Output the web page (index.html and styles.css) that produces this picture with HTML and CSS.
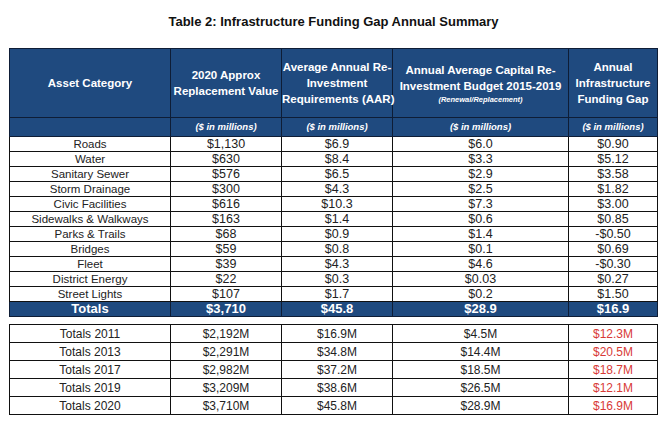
FILE: index.html
```html
<!DOCTYPE html>
<html>
<head>
<meta charset="utf-8">
<link rel="stylesheet" href="styles.css">
</head>
<body>
<div class="page">
  <h1 class="title">Table 2: Infrastructure Funding Gap Annual Summary</h1>
  <table class="summary">
    <colgroup>
      <col class="c1"><col class="c2"><col class="c3"><col class="c4"><col class="c5">
    </colgroup>
    <thead>
      <tr class="head">
        <th>Asset Category</th>
        <th>2020 Approx<br>Replacement Value</th>
        <th>Average Annual Re-<br>Investment<br>Requirements (AAR)</th>
        <th>Annual Average Capital Re-<br>Investment Budget 2015-2019<br><span class="note">(Renewal/Replacement)</span></th>
        <th>Annual<br>Infrastructure<br>Funding Gap</th>
      </tr>
      <tr class="units">
        <th></th>
        <th>($ in millions)</th>
        <th>($ in millions)</th>
        <th>($ in millions)</th>
        <th>($ in millions)</th>
      </tr>
    </thead>
    <tbody>
      <tr><td>Roads</td><td class="n">$1,130</td><td class="n">$6.9</td><td class="n">$6.0</td><td class="n">$0.90</td></tr>
      <tr><td>Water</td><td class="n">$630</td><td class="n">$8.4</td><td class="n">$3.3</td><td class="n">$5.12</td></tr>
      <tr><td>Sanitary Sewer</td><td class="n">$576</td><td class="n">$6.5</td><td class="n">$2.9</td><td class="n">$3.58</td></tr>
      <tr><td>Storm Drainage</td><td class="n">$300</td><td class="n">$4.3</td><td class="n">$2.5</td><td class="n">$1.82</td></tr>
      <tr><td>Civic Facilities</td><td class="n">$616</td><td class="n">$10.3</td><td class="n">$7.3</td><td class="n">$3.00</td></tr>
      <tr><td>Sidewalks &amp; Walkways</td><td class="n">$163</td><td class="n">$1.4</td><td class="n">$0.6</td><td class="n">$0.85</td></tr>
      <tr><td>Parks &amp; Trails</td><td class="n">$68</td><td class="n">$0.9</td><td class="n">$1.4</td><td class="n">-$0.50</td></tr>
      <tr><td>Bridges</td><td class="n">$59</td><td class="n">$0.8</td><td class="n">$0.1</td><td class="n">$0.69</td></tr>
      <tr><td>Fleet</td><td class="n">$39</td><td class="n">$4.3</td><td class="n">$4.6</td><td class="n">-$0.30</td></tr>
      <tr><td>District Energy</td><td class="n">$22</td><td class="n">$0.3</td><td class="n">$0.03</td><td class="n">$0.27</td></tr>
      <tr><td>Street Lights</td><td class="n">$107</td><td class="n">$1.7</td><td class="n">$0.2</td><td class="n">$1.50</td></tr>
      <tr class="total"><td>Totals</td><td>$3,710</td><td>$45.8</td><td>$28.9</td><td>$16.9</td></tr>
    </tbody>
  </table>
  <table class="history">
    <colgroup>
      <col class="c1"><col class="c2"><col class="c3"><col class="c4"><col class="c5">
    </colgroup>
    <tbody>
      <tr><td>Totals 2011</td><td>$2,192M</td><td>$16.9M</td><td>$4.5M</td><td class="gap">$12.3M</td></tr>
      <tr><td>Totals 2013</td><td>$2,291M</td><td>$34.8M</td><td>$14.4M</td><td class="gap">$20.5M</td></tr>
      <tr><td>Totals 2017</td><td>$2,982M</td><td>$37.2M</td><td>$18.5M</td><td class="gap">$18.7M</td></tr>
      <tr><td>Totals 2019</td><td>$3,209M</td><td>$38.6M</td><td>$26.5M</td><td class="gap">$12.1M</td></tr>
      <tr><td>Totals 2020</td><td>$3,710M</td><td>$45.8M</td><td>$28.9M</td><td class="gap">$16.9M</td></tr>
    </tbody>
  </table>
</div>
</body>
</html>
```
FILE: styles.css
```css
html, body {
  margin: 0;
  padding: 0;
  background: #ffffff;
}

.page {
  width: 667px;
  padding: 14px 0 0 9px;
  box-sizing: border-box;
  font-family: "Liberation Sans", Arial, sans-serif;
  color: #1a1a1a;
}

.title {
  margin: 0 0 18px -9px;
  width: 667px;
  text-align: center;
  font-size: 13px;
  line-height: 16px;
  font-weight: bold;
  color: #111;
}

table {
  border-collapse: collapse;
  table-layout: fixed;
  width: 648px;
}

col.c1 { width: 161px; }
col.c2 { width: 111px; }
col.c3 { width: 111px; }
col.c4 { width: 176px; }
col.c5 { width: 89px; }

.summary {
  border: 1px solid #0e1d36;
}

.summary th {
  background: #1f4a7f;
  color: #ffffff;
  border: 1px solid #0e1d36;
  padding: 0;
  text-align: center;
  font-weight: bold;
  white-space: nowrap;
}

.head {
  height: 69px;
}

.head th {
  font-size: 11.5px;
  line-height: 16px;
}

.head th .note {
  display: block;
  font-size: 7.5px;
  line-height: 10px;
  font-style: italic;
  margin-top: 1px;
}

.units {
  height: 19px;
}

.units th {
  font-size: 9.5px;
  font-style: italic;
  line-height: 12px;
}

.summary td {
  border: 1px solid #111;
  padding: 0;
  height: 14px;
  line-height: 14px;
  text-align: center;
  font-size: 11.5px;
  color: #222;
}

.summary td.n {
  font-size: 12.5px;
}

.summary tr.total td {
  background: #1f4a7f;
  color: #ffffff;
  font-weight: bold;
  font-size: 13px;
  border-color: #0e1d36;
}

.history {
  margin-top: 7px;
  border: 1px solid #111;
}

.history td {
  border: 1px solid #111;
  padding: 0;
  height: 17px;
  line-height: 16px;
  text-align: center;
  font-size: 12px;
  color: #222;
}

.history td.gap {
  color: #d83a36;
}
```
